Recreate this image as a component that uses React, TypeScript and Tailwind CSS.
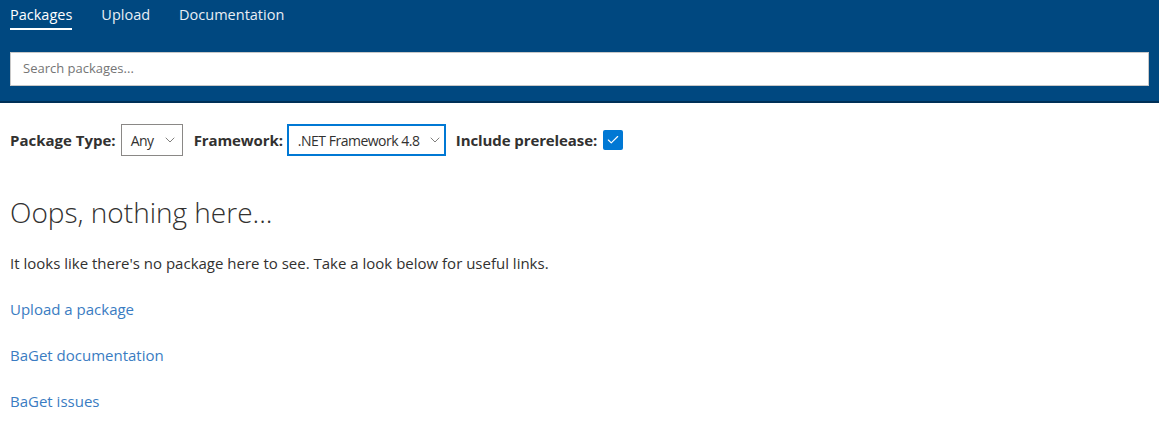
import { Check, ChevronDown } from 'lucide-react'

const font = { fontFamily: '"Open Sans", "Noto Sans", sans-serif' }

function Select({ value, width, active }: { value: string; width: string; active?: boolean }) {
  return (
    <div
      className={`flex h-8 items-center justify-between gap-2 whitespace-nowrap bg-white pl-[9px] pr-[6px] text-[14px] font-normal text-[#323130] ${width} ${
        active ? 'border-2 border-[#0078d4]' : 'border border-[#8a8886]'
      }`}
    >
      <span className="tracking-[-0.5px]">{value}</span>
      <ChevronDown className="h-4 w-4 shrink-0 text-[#605e5c]" strokeWidth={1.2} />
    </div>
  )
}

export default function App() {
  const links = ['Upload a package', 'BaGet documentation', 'BaGet issues']

  return (
    <div className="min-h-[445px] bg-white" style={font}>
      <header className="border-b-2 border-[#003057] bg-[#004880] px-[10px] pb-[15px]">
        <nav className="flex h-[35px] items-start gap-[29px] pt-[5px] text-[14.5px] text-white">
          <span className="border-b-2 border-white pb-[3px] leading-[20px]">Packages</span>
          <span className="leading-[20px] text-[#e8eef5]">Upload</span>
          <span className="leading-[20px] text-[#e8eef5]">Documentation</span>
        </nav>
        <div className="mt-[17px] flex h-[34px] items-center border border-[#c8c8c8] bg-white pl-[12px] text-[13px] text-[#757575]">
          Search packages...
        </div>
      </header>

      <main className="px-[10px]">
        <div className="mt-[21px] flex h-8 items-center text-[15px] font-bold text-[#323130]">
          <span className="mr-[5px]">Package Type:</span>
          <Select value="Any" width="w-[62px]" />
          <span className="ml-[11px] mr-[4px] tracking-[-0.1px]">Framework:</span>
          <Select value=".NET Framework 4.8" width="w-[159px]" active />
          <span className="ml-[10px] mr-[6px] tracking-[-0.1px]">Include prerelease:</span>
          <div className="flex h-5 w-5 items-center justify-center rounded-[2px] bg-[#0078d4]">
            <Check className="h-[14px] w-[14px] text-white" strokeWidth={2} />
          </div>
        </div>

        <h1 className="mt-[37px] text-[28px] font-light leading-[38px] text-[#323130]">Oops, nothing here...</h1>
        <p className="mt-[22px] text-[15px] leading-[20px] text-[#323130]">
          It looks like there's no package here to see. Take a look below for useful links.
        </p>
        <div className="mt-[26px] flex flex-col gap-[26px]">
          {links.map((l) => (
            <a key={l} href="#" className="text-[15px] leading-[20px] text-[#3a7cc2]">
              {l}
            </a>
          ))}
        </div>
      </main>
    </div>
  )
}
